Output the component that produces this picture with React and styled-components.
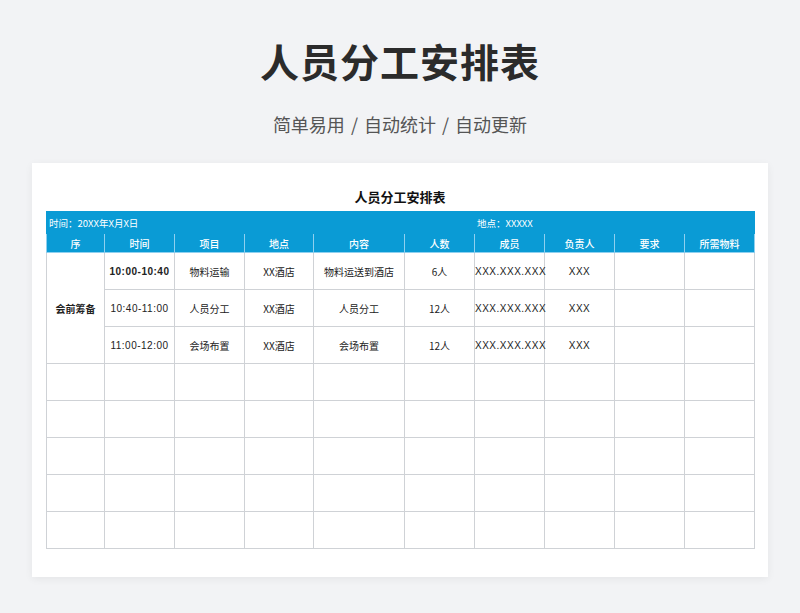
import React from "react";
import styled, { createGlobalStyle } from "styled-components";

const G = createGlobalStyle`
  body{margin:0;background:#f2f3f5;font-family:"Noto Sans CJK SC","Noto Sans",sans-serif;}
`;
const Page = styled.div`width:800px;height:613px;display:flex;flex-direction:column;align-items:center;overflow:hidden;`;
const H1 = styled.h1`margin:33px 0 0;font-size:39px;font-weight:700;color:#2b2b2b;line-height:54px;letter-spacing:1px;`;
const Sub = styled.div`margin-top:24px;font-size:18px;color:#555;line-height:26px;word-spacing:2px;`;
const Card = styled.div`margin-top:26px;width:736px;height:414px;background:#fff;box-shadow:0 2px 8px rgba(0,0,0,0.06);box-sizing:border-box;padding:24px 14px 0;`;
const TTitle = styled.div`text-align:center;font-size:13px;font-weight:700;color:#111;line-height:20px;margin-bottom:4px;`;
const Table = styled.table`border-collapse:collapse;table-layout:fixed;width:708px;font-size:10px;color:#222;`;
const Info = styled.td`background:#0a9bd5;color:#fff;height:21px;padding:0 2px;font-size:9.5px;border:1px solid #0a9bd5;border-left:${p=>p.$split?"1px solid #8fd0ef":"1px solid #0a9bd5"};`;
const Th = styled.th`background:#0a9bd5;color:#fff;font-weight:500;height:18px;padding:0;font-size:10px;border:1px solid #8fd0ef;border-top-color:#8fd0ef;`;
const Td = styled.td`border:1px solid #cfd2d6;height:36px;padding:0;text-align:center;font-weight:${p=>p.$b?700:400};font-family:${p=>p.$mono?'"Liberation Sans","Noto Sans CJK SC",sans-serif':'inherit'};letter-spacing:${p=>p.$mono?"0.5px":"0"};`;

const widths=[58,70,70,69,91,70,70,70,70,70];
const heads=["序","时间","项目","地点","内容","人数","成员","负责人","要求","所需物料"];
const rows=[
  ["10:00-10:40","物料运输","XX酒店","物料运送到酒店","6人"],
  ["10:40-11:00","人员分工","XX酒店","人员分工","12人"],
  ["11:00-12:00","会场布置","XX酒店","会场布置","12人"],
];
export default function App(){
  return <Page><G/>
    <H1>人员分工安排表</H1>
    <Sub>简单易用 / 自动统计 / 自动更新</Sub>
    <Card>
      <TTitle>人员分工安排表</TTitle>
      <Table>
        <colgroup>{widths.map((w,i)=><col key={i} style={{width:w}}/>)}</colgroup>
        <tbody>
          <tr><Info colSpan={6}>时间：20XX年X月X日</Info><Info colSpan={4} $split>地点：XXXXX</Info></tr>
          <tr>{heads.map(h=><Th key={h}>{h}</Th>)}</tr>
          {rows.map((r,i)=><tr key={i}>
            {i===0&&<Td rowSpan={3} $b>会前筹备</Td>}
            <Td $mono $b={i===0}>{r[0]}</Td><Td>{r[1]}</Td><Td>{r[2]}</Td><Td>{r[3]}</Td><Td>{r[4]}</Td>
            <Td $mono>XXX.XXX.XXX</Td><Td $mono>XXX</Td><Td/><Td/>
          </tr>)}
          {[0,1,2,3,4].map(i=><tr key={"e"+i}>{widths.map((_,j)=><Td key={j}/>)}</tr>)}
        </tbody>
      </Table>
    </Card>
  </Page>;
}
